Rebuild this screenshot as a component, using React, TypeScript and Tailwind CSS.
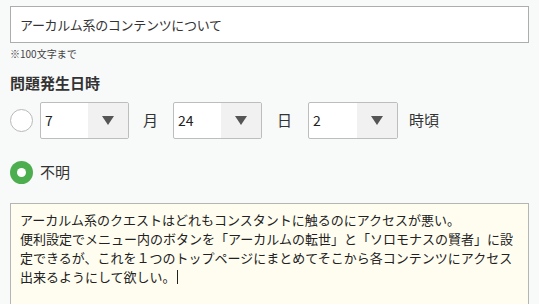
const font = { fontFamily: '"Noto Sans CJK JP", "Open Sans", sans-serif' };

function Radio({ checked }: { checked?: boolean }) {
  if (checked) {
    return (
      <span className="flex h-[23px] w-[23px] shrink-0 items-center justify-center rounded-full bg-[#4dae50]">
        <span className="h-[9px] w-[9px] rounded-full bg-white" />
      </span>
    );
  }
  return (
    <span className="h-[23px] w-[23px] shrink-0 rounded-full border border-[#b9b9b9] bg-white" />
  );
}

function SelectBox({ value, width }: { value: string; width: string }) {
  return (
    <div
      className={`flex h-[37px] ${width} shrink-0 overflow-hidden rounded-[2px] border border-[#bdbdbd] bg-white`}
    >
      <div className="flex flex-1 items-center pl-[4px] text-[14px] text-[#222]">
        {value}
      </div>
      <div className="flex w-[40px] items-center justify-center bg-[#f1f1f1]">
        <svg width="12" height="9" viewBox="0 0 12 9">
          <path d="M0 0 H12 L6 9 Z" fill="#555" />
        </svg>
      </div>
    </div>
  );
}

export default function App() {
  return (
    <div
      className="h-[304px] w-[539px] overflow-hidden bg-[#f8f9f9] px-[10px] pt-[6px] text-[#222]"
      style={font}
    >
      <div className="flex h-[37px] w-[519px] items-center border border-[#adadad] bg-white pl-[9px] text-[13px] tracking-[-0.3px] text-[#333]">
        アーカルム系のコンテンツについて
      </div>
      <div className="mt-[5px] text-[10px] leading-[12px] text-[#444]">
        ※100文字まで
      </div>
      <div className="mt-[13px] text-[15px] font-bold leading-[20px] text-[#333]">
        問題発生日時
      </div>
      <div className="mt-[9px] flex items-center">
        <Radio />
        <div className="ml-[7px]">
          <SelectBox value="7" width="w-[89px]" />
        </div>
        <span className="ml-[14px] mr-[15px] text-[15px] text-[#333]">月</span>
        <SelectBox value="24" width="w-[89px]" />
        <span className="ml-[15px] mr-[16px] text-[15px] text-[#333]">日</span>
        <SelectBox value="2" width="w-[90px]" />
        <span className="ml-[11px] text-[15px] text-[#333]">時頃</span>
      </div>
      <div className="mt-[22px] flex items-center">
        <Radio checked />
        <span className="ml-[7px] text-[15px] text-[#333]">不明</span>
      </div>
      <div className="mt-[19px] h-[110px] w-[519px] border border-[#b5b5b5] bg-[#fffdf0] pl-[9px] pt-[6px] text-[13px] leading-[19px] whitespace-pre text-[#222]">
        <div>アーカルム系のクエストはどれもコンスタントに触るのにアクセスが悪い。</div>
        <div>便利設定でメニュー内のボタンを「アーカルムの転世」と「ソロモナスの賢者」に設</div>
        <div>定できるが、これを１つのトップページにまとめてそこから各コンテンツにアクセス</div>
        <div className="flex items-center">
          出来るようにして欲しい。
          <span className="ml-[1px] inline-block h-[14px] w-[1px] bg-[#222]" />
        </div>
      </div>
    </div>
  );
}
